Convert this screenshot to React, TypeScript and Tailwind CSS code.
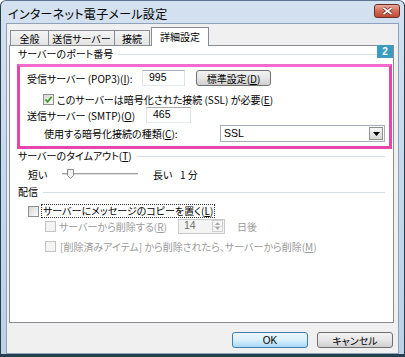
import React from "react";

const font = "font-['Noto_Sans_CJK_JP','Noto_Sans_CJK_SC',sans-serif] [font-feature-settings:'palt']";

function Check({ checked = false, disabled = false }: { checked?: boolean; disabled?: boolean }) {
  return (
    <span
      className={`relative flex h-[11px] w-[11px] shrink-0 items-center justify-center border ${
        disabled ? "border-[#c3c3c3] bg-[#f4f4f4]" : "border-[#8e8f8f] bg-gradient-to-br from-[#d8d8d8] to-[#fbfbfb]"
      }`}
    >
      {checked && (
        <svg width="9" height="9" viewBox="0 0 9 9">
          <path d="M1.5 4.5 L3.6 6.8 L7.6 1.8" fill="none" stroke="#3f9a2a" strokeWidth="1.8" />
        </svg>
      )}
    </span>
  );
}

function GroupHeader({ children }: { children: React.ReactNode }) {
  return (
    <div className="flex h-[14px] items-center pl-[8px] pr-[8px]">
      <span className="leading-none">{children}</span>
      <span className="ml-[5px] h-px flex-1 bg-[#d5dfe5]" />
    </div>
  );
}

function Field({ value, width }: { value: string; width: string }) {
  return (
    <div className={`flex h-[16px] ${width} items-center border border-[#abadb3] border-l-[#e2e3ea] border-r-[#dbdfe6] border-b-[#e3e9ef] bg-white pl-[6px] font-['Liberation_Sans',sans-serif] text-[10.5px]`}>
      {value}
    </div>
  );
}

function Button({ children, width, primary = false }: { children: React.ReactNode; width: string; primary?: boolean }) {
  return (
    <div
      className={`flex h-[16px] ${width} items-center justify-center rounded-[3px] border ${
        primary
          ? "border-[#3c7fb1] bg-gradient-to-b from-[#eaf6fd] via-[#d9f0fc] to-[#a7d9f5]"
          : "border-[#707070] bg-gradient-to-b from-[#f2f2f2] via-[#e6e6e6] to-[#cfcfcf]"
      }`}
    >
      {children}
    </div>
  );
}

function Tab({ label, width, active = false }: { label: string; width: string; active?: boolean }) {
  return (
    <div
      className={`flex ${width} items-center justify-center border border-[#898c95] ${
        active
          ? "h-[19px] -mx-px border-b-0 bg-white pb-[2px]"
          : "h-[16px] bg-gradient-to-b from-[#f4f4f4] to-[#e4e4e4]"
      }`}
    >
      {label}
    </div>
  );
}

export default function App() {
  return (
    <div className={`h-[357px] w-[405px] overflow-hidden bg-white text-[10px] text-black ${font}`}>
      <div className="flex h-full flex-col rounded-t-[6px] border-x border-b-[3px] border-[#24404f] border-t border-t-[#5d7590] bg-gradient-to-b from-[#d4e1f0] via-[#c6d8ec] to-[#bdd0e6] px-[5px]">
        {/* Title bar */}
        <div className="flex h-[22px] shrink-0 items-center">
          <span className="ml-[2px] mt-[3px] text-[12px] tracking-[0.3px]">インターネット電子メール設定</span>
          <div className="ml-auto mr-[-1px] mt-[-3px] flex h-[14px] w-[26px] items-center justify-center rounded-[3px] border border-[#6b2d27] bg-gradient-to-b from-[#e9a999] via-[#d46b58] to-[#c04a38]">
            <svg width="11" height="8" viewBox="0 0 11 8">
              <path d="M1.5 1 L9.5 7 M9.5 1 L1.5 7" stroke="#4a1a14" strokeWidth="3" />
              <path d="M1.5 1 L9.5 7 M9.5 1 L1.5 7" stroke="#ffffff" strokeWidth="1.8" />
            </svg>
          </div>
        </div>

        {/* Dialog body */}
        <div className="flex flex-1 flex-col border border-[#8ea3bb] bg-[#f0f0f0] pl-[2px] pr-[4px]">
          <div className="relative z-10 -mb-px flex h-[22px] items-end pl-[1px]">
            <Tab label="全般" width="w-[39px]" />
            <Tab label="送信サーバー" width="w-[67px] -ml-px" />
            <Tab label="接続" width="w-[36px] -ml-px" />
            <Tab label="詳細設定" width="w-[58px] ml-px" active />
          </div>

          <div className="relative flex h-[278px] flex-col border border-[#898c95] bg-white">
            <div className="absolute right-0 top-[-1px] flex h-[13px] w-[16px] items-center justify-center bg-[#3a9dbf] font-['Liberation_Sans',sans-serif] text-[10px] font-bold text-white">
              2
            </div>

            <div className="mt-[1px]">
              <GroupHeader>サーバーのポート番号</GroupHeader>
            </div>

            {/* Highlighted port settings */}
            <div className="ml-[7px] mr-[1px] mt-[3px] flex h-[85px] flex-col border-[3px] border-[#e646ab] border-t-[#f46bd0]">
              <div className="mt-[3px] flex h-[16px] items-center pl-[7px]">
                <span className="w-[115px]">
                  受信サーバー (POP3)(<u>I</u>):
                </span>
                <Field value="995" width="w-[43px]" />
                <div className="ml-[11px]">
                  <Button width="w-[75px]">
                    標準設定(<u>D</u>)
                  </Button>
                </div>
              </div>
              <div className="mt-[7px] flex h-[12px] items-center pl-[23px]">
                <Check checked />
                <span className="ml-[3px]">
                  このサーバーは暗号化された接続 (SSL) が必要(<u>E</u>)
                </span>
              </div>
              <div className="mt-[2px] flex h-[16px] items-center pl-[7px]">
                <span className="w-[119px]">
                  送信サーバー (SMTP)(<u>O</u>)
                </span>
                <Field value="465" width="w-[45px]" />
              </div>
              <div className="mt-[2px] flex h-[17px] items-center pl-[24px]">
                <span className="w-[176px]">
                  使用する暗号化接続の種類(<u>C</u>):
                </span>
                <div className="flex h-[17px] w-[165px] items-center border border-[#a5acb5] bg-white pl-[3px] font-['Liberation_Sans',sans-serif] text-[10.5px]">
                  SSL
                  <div className="ml-auto mr-[1px] flex h-[13px] w-[14px] items-center justify-center border border-[#8f8f8f] bg-gradient-to-b from-[#f6f6f6] to-[#d8d8d8]">
                    <svg width="7" height="4" viewBox="0 0 7 4">
                      <path d="M0 0 H7 L3.5 4 Z" fill="#000" />
                    </svg>
                  </div>
                </div>
              </div>
            </div>

            <GroupHeader>
              サーバーのタイムアウト(<u>T</u>)
            </GroupHeader>

            <div className="mt-[4px] flex h-[14px] items-center pl-[18px]">
              <span className="w-[34px]">短い</span>
              <div className="relative flex h-[10px] w-[76px] items-center">
                <span className="h-[2px] w-full border-t border-[#a0a0a0] border-b-[#e8e8e8] bg-[#e0e0e0]" />
                <svg className="absolute left-[5px] top-[0px]" width="7" height="10" viewBox="0 0 7 10">
                  <path d="M0.5 0.5 H6.5 V6.5 L3.5 9.5 L0.5 6.5 Z" fill="#f2f2f2" stroke="#8a8a8a" />
                </svg>
              </div>
              <span className="ml-[15px] w-[27px]">長い</span>
              <span>1 分</span>
            </div>

            <div className="mt-[4px]">
              <GroupHeader>配信</GroupHeader>
            </div>

            <div className="mt-[5px] flex h-[14px] items-center pl-[18px]">
              <Check />
              <span className="ml-[3px] px-px leading-[12px] outline-1 outline-dotted outline-[#333]">
                サーバーにメッセージのコピーを置く(<u>L</u>)
              </span>
            </div>

            <div className="mt-[1px] flex h-[14px] items-center pl-[35px] text-[#9a9a9a]">
              <Check disabled />
              <span className="ml-[3px] w-[119px]">
                サーバーから削除する(<u>R</u>)
              </span>
              <div className="flex h-[15px] w-[47px] items-center border border-[#c9c9c9] bg-[#f4f4f4] pl-[5px] font-['Liberation_Sans',sans-serif] text-[10.5px] text-[#6d6d6d]">
                14
                <div className="ml-auto mr-px flex h-[12px] w-[11px] flex-col border border-[#cfcfcf] bg-[#f7f7f7]">
                  <div className="flex flex-1 items-center justify-center border-b border-[#d6d6d6]">
                    <svg width="5" height="3" viewBox="0 0 5 3">
                      <path d="M0 3 H5 L2.5 0 Z" fill="#a8a8a8" />
                    </svg>
                  </div>
                  <div className="flex flex-1 items-center justify-center">
                    <svg width="5" height="3" viewBox="0 0 5 3">
                      <path d="M0 0 H5 L2.5 3 Z" fill="#a8a8a8" />
                    </svg>
                  </div>
                </div>
              </div>
              <span className="ml-[12px]">日後</span>
            </div>

            <div className="mt-[6px] flex h-[14px] items-center pl-[35px] text-[#9a9a9a]">
              <Check disabled />
              <span className="ml-[4px]">
                [削除済みアイテム] から削除されたら、サーバーから削除(<u>M</u>)
              </span>
            </div>
          </div>

          <div className="mt-[9px] flex justify-end gap-[9px] pr-[1px]">
            <Button width="w-[76px]" primary>
              <span className="font-['Liberation_Sans',sans-serif] text-[10px]">OK</span>
            </Button>
            <Button width="w-[76px]">キャンセル</Button>
          </div>
        </div>
      </div>
    </div>
  );
}
